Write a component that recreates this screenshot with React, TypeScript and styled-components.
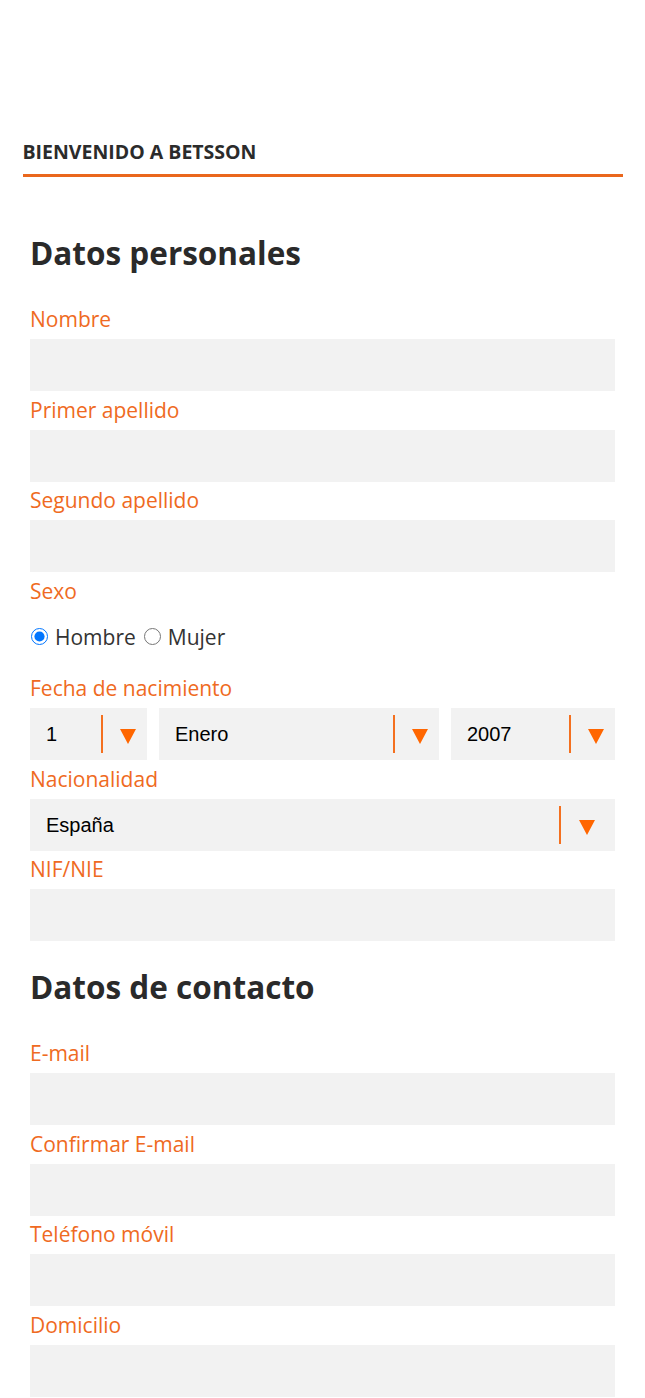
import React, { useState } from 'react';
import styled, { createGlobalStyle } from 'styled-components';

const GlobalStyle = createGlobalStyle`
  html, body {
    margin: 0;
    padding: 0;
    background: #fff;
  }
  body {
    font-family: "Open Sans", "DejaVu Sans", sans-serif;
    color: #2b2b2b;
  }
  * {
    box-sizing: border-box;
  }
`;

const Page = styled.div`
  max-width: 600px;
  margin: 0 auto;
  padding-top: 140px;
`;

const Welcome = styled.h1`
  margin: 0;
  padding-bottom: 10px;
  border-bottom: 3px solid #ea671d;
  font-size: 19.5px;
  line-height: 24px;
  font-weight: 700;
  text-transform: uppercase;
  color: #2b2b2b;
`;

const Form = styled.form`
  padding: 30px 7.5px 0;
`;

const SectionTitle = styled.h2`
  margin: 28px 0 34px;
  font-size: 31.5px;
  line-height: 36px;
  font-weight: 700;
  color: #2a2a2a;
`;

const Field = styled.div`
  margin-bottom: 4.5px;
`;

const Label = styled.label`
  display: block;
  margin-bottom: 6px;
  font-size: 21px;
  line-height: 28px;
  color: #ef6a22;
`;

const TextInput = styled.input`
  display: block;
  width: 100%;
  height: 52px;
  border: 0;
  padding: 0 16px;
  background: #f2f2f2;
  font-family: "Liberation Sans", Arial, sans-serif;
  font-size: 20px;
  outline: none;
`;

const RadioGroup = styled.div`
  margin: 17.5px 0 22px;
  font-size: 21px;
  line-height: 30px;
  color: #333;
`;

const RadioOption = styled.label`
  display: inline-block;
  margin-right: 7px;
`;

const Radio = styled.input`
  width: 17px;
  height: 17px;
  margin: 0 7px 2px 1px;
  vertical-align: baseline;
`;

const DateRow = styled.div`
  display: grid;
  grid-template-columns: 117fr 280fr 164fr;
  gap: 12px;
`;

const SelectBox = styled.div`
  position: relative;
  height: 52px;
  background: #f2f2f2;
`;

const NativeSelect = styled.select`
  appearance: none;
  width: 100%;
  height: 100%;
  border: 0;
  padding: 0 16px;
  background: transparent;
  font-family: "Liberation Sans", Arial, sans-serif;
  font-size: 20px;
  color: #000;
  outline: none;
`;

const Divider = styled.span<{ $right: number }>`
  position: absolute;
  top: 7px;
  bottom: 7px;
  right: ${p => p.$right}px;
  width: 2px;
  background: #f4701f;
  pointer-events: none;
`;

const Arrow = styled.span<{ $right: number }>`
  position: absolute;
  top: 21px;
  right: ${p => p.$right}px;
  width: 0;
  height: 0;
  border-left: 8px solid transparent;
  border-right: 8px solid transparent;
  border-top: 15px solid #ff6600;
  pointer-events: none;
`;

const months = [
  'Enero', 'Febrero', 'Marzo', 'Abril', 'Mayo', 'Junio',
  'Julio', 'Agosto', 'Septiembre', 'Octubre', 'Noviembre', 'Diciembre',
];

const days = Array.from({ length: 31 }, (_, i) => String(i + 1));
const years = Array.from({ length: 100 }, (_, i) => String(2007 - i));

type SelectProps = {
  options: string[];
  value: string;
  onChange: (v: string) => void;
  wide?: boolean;
};

const Select = ({ options, value, onChange, wide }: SelectProps) => (
  <SelectBox>
    <NativeSelect value={value} onChange={e => onChange(e.target.value)}>
      {options.map(o => (
        <option key={o} value={o}>{o}</option>
      ))}
    </NativeSelect>
    <Divider $right={wide ? 54 : 44} />
    <Arrow $right={wide ? 20 : 11} />
  </SelectBox>
);

const TextField = ({ label, type = 'text' }: { label: string; type?: string }) => (
  <Field>
    <Label>{label}</Label>
    <TextInput type={type} />
  </Field>
);

const App = () => {
  const [sex, setSex] = useState('hombre');
  const [day, setDay] = useState('1');
  const [month, setMonth] = useState('Enero');
  const [year, setYear] = useState('2007');
  const [country, setCountry] = useState('España');

  return (
    <>
      <GlobalStyle />
      <Page>
        <Welcome>Bienvenido a Betsson</Welcome>
        <Form onSubmit={e => e.preventDefault()}>
          <SectionTitle>Datos personales</SectionTitle>
          <TextField label="Nombre" />
          <TextField label="Primer apellido" />
          <TextField label="Segundo apellido" />

          <Label as="div">Sexo</Label>
          <RadioGroup>
            <RadioOption>
              <Radio type="radio" name="sexo" checked={sex === 'hombre'} onChange={() => setSex('hombre')} />
              Hombre
            </RadioOption>
            <RadioOption>
              <Radio type="radio" name="sexo" checked={sex === 'mujer'} onChange={() => setSex('mujer')} />
              Mujer
            </RadioOption>
          </RadioGroup>

          <Field>
            <Label as="div">Fecha de nacimiento</Label>
            <DateRow>
              <Select options={days} value={day} onChange={setDay} />
              <Select options={months} value={month} onChange={setMonth} />
              <Select options={years} value={year} onChange={setYear} />
            </DateRow>
          </Field>

          <Field>
            <Label as="div">Nacionalidad</Label>
            <Select options={['España', 'Portugal', 'Francia', 'Otra']} value={country} onChange={setCountry} wide />
          </Field>

          <TextField label="NIF/NIE" />

          <SectionTitle>Datos de contacto</SectionTitle>
          <TextField label="E-mail" type="email" />
          <TextField label="Confirmar E-mail" type="email" />
          <TextField label="Teléfono móvil" type="tel" />
          <TextField label="Domicilio" />
        </Form>
      </Page>
    </>
  );
};

export default App;
